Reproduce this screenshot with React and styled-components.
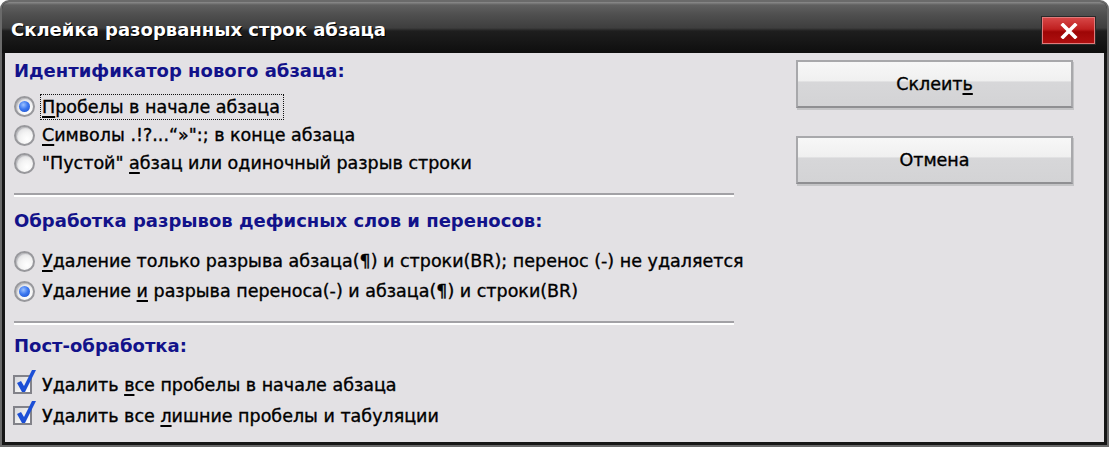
import React from 'react';
import styled, { createGlobalStyle } from 'styled-components';

const GlobalStyle = createGlobalStyle`
  html, body {
    margin: 0;
    padding: 0;
    background: #ffffff;
  }
  body {
    font-family: "DejaVu Sans", Tahoma, sans-serif;
  }
`;

const Window = styled.div`
  width: 1109px;
  height: 447px;
  box-sizing: border-box;
  border: 2px solid #6a6a6a;
  border-radius: 9px 9px 0 0;
  background: #161616;
  display: flex;
  flex-direction: column;
  overflow: hidden;
`;

const TitleBar = styled.div`
  height: 51px;
  flex-shrink: 0;
  display: flex;
  align-items: center;
  padding: 0 10px 0 9px;
  background: linear-gradient(
    to bottom,
    #8c8c8c 0,
    #606060 3px,
    #505050 12px,
    #3e3e3e 26px,
    #1e1e1e 29px,
    #0e0e0e 100%
  );
`;

const Title = styled.div`
  flex: 1;
  color: #ffffff;
  font-weight: bold;
  font-size: 18px;
  text-shadow: 1px 1px 0 #000;
  padding-top: 4px;
`;

const CloseButton = styled.div`
  width: 53px;
  height: 27px;
  margin-top: 6px;
  margin-right: 1px;
  border: 1px solid #2a2a2a;
  box-shadow: inset 0 0 0 1px #e27a7a;
  background: linear-gradient(to bottom, #d84a4a 0, #c02020 45%, #9e0606 55%, #b01010 100%);
  display: flex;
  align-items: center;
  justify-content: center;
`;

const Body = styled.div`
  flex: 1;
  margin: 0 3px 3px 3px;
  background: #e3e1e4;
  display: flex;
`;

const OptionsColumn = styled.div`
  width: 720px;
  padding: 4px 0 0 9px;
  display: flex;
  flex-direction: column;
`;

const ButtonsColumn = styled.div`
  margin-left: 62px;
  padding-top: 7px;
  display: flex;
  flex-direction: column;
  gap: 28px;
`;

const Heading = styled.div`
  height: 28px;
  line-height: 28px;
  color: #12128a;
  font-weight: bold;
  font-size: 18px;
  white-space: nowrap;
  margin-top: ${(p) => p.$top || 0}px;
  margin-bottom: ${(p) => p.$bottom || 0}px;
`;

const Row = styled.div`
  height: ${(p) => p.$h || 29}px;
  display: flex;
  align-items: center;
  font-size: 17.5px;
  color: #000;
  -webkit-text-stroke: 0.35px #000;
  white-space: nowrap;
`;

const Radio = styled.span`
  position: relative;
  width: 21px;
  height: 21px;
  box-sizing: border-box;
  border-radius: 50%;
  border: 2px solid #98989c;
  box-shadow: inset 1px 1px 1px #b8b8bc;
  background: radial-gradient(circle at 65% 70%, #ffffff 0, #f4f4f4 40%, #d2d2d6 100%);
  margin: 0 7px 0 0;
  flex-shrink: 0;
  display: flex;
  align-items: center;
  justify-content: center;

  &::after {
    content: '';
    display: ${(p) => (p.$checked ? 'block' : 'none')};
    width: 11px;
    height: 11px;
    border-radius: 50%;
    background: radial-gradient(circle at 40% 35%, #9cc2ff 0, #3c78f0 45%, #1a4cc8 100%);
  }
`;

const CheckBox = styled.span`
  position: relative;
  width: 19px;
  height: 19px;
  box-sizing: border-box;
  border: 2px solid #828289;
  background: linear-gradient(135deg, #d6d6da 0, #f2f2f2 60%, #ffffff 100%);
  margin: 0 10px 0 -1px;
  flex-shrink: 0;
`;

const CheckMark = styled.svg`
  position: absolute;
  left: 1px;
  top: -8px;
`;

const Focus = styled.span`
  outline: 1px dotted #111;
  outline-offset: 1px;
  padding: 1px 2px 1px 0;
`;

const Key = styled.u`
  text-decoration-thickness: 2px;
  text-underline-offset: 3px;
`;

const Separator = styled.div`
  height: 2px;
  background: #a2a1a5;
  border-bottom: 2px solid #ffffff;
  margin-top: ${(p) => p.$top || 0}px;
`;

const Button = styled.div`
  width: 277px;
  height: 48px;
  box-sizing: border-box;
  border: 2px solid #a8a8ab;
  border-bottom-color: #8f8f92;
  box-shadow: 1px 2px 0 #c4c4c6;
  background: linear-gradient(to bottom, #f7f7f7 0, #f0f0f0 42%, #d7d7d9 46%, #d3d3d5 100%);
  display: flex;
  align-items: center;
  justify-content: center;
  font-size: 17.5px;
  -webkit-text-stroke: 0.35px #000;
  color: #000;
`;

const Check = () => (
  <CheckMark width="21" height="24" viewBox="0 0 21 24">
    <path d="M1 14 L5 12 L8 17 L16 1 L20 1 L9 23 L6 23 Z" fill="#1c4fd6" />
  </CheckMark>
);

const RadioRow = ({ checked, h, children }) => (
  <Row $h={h}>
    <Radio $checked={checked} />
    <span>{children}</span>
  </Row>
);

const CheckRow = ({ h, children }) => (
  <Row $h={h}>
    <CheckBox>
      <Check />
    </CheckBox>
    <span>{children}</span>
  </Row>
);

const App = () => (
  <>
    <GlobalStyle />
    <Window>
      <TitleBar>
        <Title>Склейка разорванных строк абзаца</Title>
        <CloseButton>
          <svg width="18" height="16" viewBox="0 0 18 16">
            <path d="M3 2 L15 14 M15 2 L3 14" stroke="#ffffff" strokeWidth="3.6" strokeLinecap="square" />
          </svg>
        </CloseButton>
      </TitleBar>
      <Body>
        <OptionsColumn>
          <Heading $bottom={7}>Идентификатор нового абзаца:</Heading>
          <RadioRow checked h={29}>
            <Focus>
              <Key>П</Key>робелы в начале абзаца
            </Focus>
          </RadioRow>
          <RadioRow h={28}>
            <Key>С</Key>имволы .!?...“»":; в конце абзаца
          </RadioRow>
          <RadioRow h={28}>
            "Пустой" <Key>а</Key>бзац или одиночный разрыв строки
          </RadioRow>
          <Separator $top={16} />
          <Heading $top={10} $bottom={11}>
            Обработка разрывов дефисных слов и переносов:
          </Heading>
          <RadioRow h={30}>
            <Key>У</Key>даление только разрыва абзаца(¶) и строки(BR); перенос (-) не удаляется
          </RadioRow>
          <RadioRow checked h={30}>
            Удаление <Key>и</Key> разрыва переноса(-) и абзаца(¶) и строки(BR)
          </RadioRow>
          <Separator $top={15} />
          <Heading $top={7} $bottom={9}>
            Пост-обработка:
          </Heading>
          <CheckRow h={31}>
            Удалить <Key>в</Key>се пробелы в начале абзаца
          </CheckRow>
          <CheckRow h={31}>
            Удалить все <Key>л</Key>ишние пробелы и табуляции
          </CheckRow>
        </OptionsColumn>
        <ButtonsColumn>
          <Button>
            <span>
              Склеит<Key>ь</Key>
            </span>
          </Button>
          <Button>Отмена</Button>
        </ButtonsColumn>
      </Body>
    </Window>
  </>
);

export default App;
